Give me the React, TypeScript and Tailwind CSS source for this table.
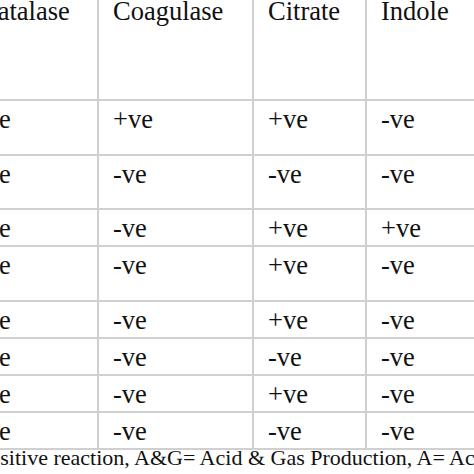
import React from 'react'

const header = ['Catalase', 'Coagulase', 'Citrate', 'Indole']

// first column is cut off on the left, only the trailing "e" shows
const rows: string[][] = [
  ['-ve', '+ve', '+ve', '-ve'],
  ['-ve', '-ve', '-ve', '-ve'],
  ['-ve', '-ve', '+ve', '+ve'],
  ['-ve', '-ve', '+ve', '-ve'],
  ['-ve', '-ve', '+ve', '-ve'],
  ['-ve', '-ve', '-ve', '-ve'],
  ['-ve', '-ve', '+ve', '-ve'],
  ['-ve', '-ve', '-ve', '-ve'],
]

export default function App() {
  return (
    <div className="w-[474px] h-[474px] overflow-hidden bg-white text-[#111] font-['Liberation_Serif',serif]">
      <div className="ml-[-34px] mt-[-6px] w-[597px] grid grid-cols-[131px_153px_111px_200px] grid-rows-[105px_53px_52px_35px_53px_35px_35px_35px_35px] gap-[2px] pb-[2px] bg-[#d0d0d0]">
        {header.map((h) => (
          <div key={h} className="bg-white pl-[14px] pt-[2px] text-[26.5px] leading-[30px]">
            {h}
          </div>
        ))}
        {rows.map((r, i) =>
          r.map((c, j) => (
            <div
              key={i + '-' + j}
              className={(j === 0 ? 'pl-[11px] ' : 'pl-[14px] ') + 'bg-white pt-[3px] text-[26.5px] leading-[30px]'}
            >
              {c}
            </div>
          ))
        )}
      </div>
      <div className="ml-[-23px] whitespace-nowrap text-[22px] leading-[16px]">
        Positive reaction, A&amp;G= Acid &amp; Gas Production, A= Acid Production
      </div>
    </div>
  )
}
